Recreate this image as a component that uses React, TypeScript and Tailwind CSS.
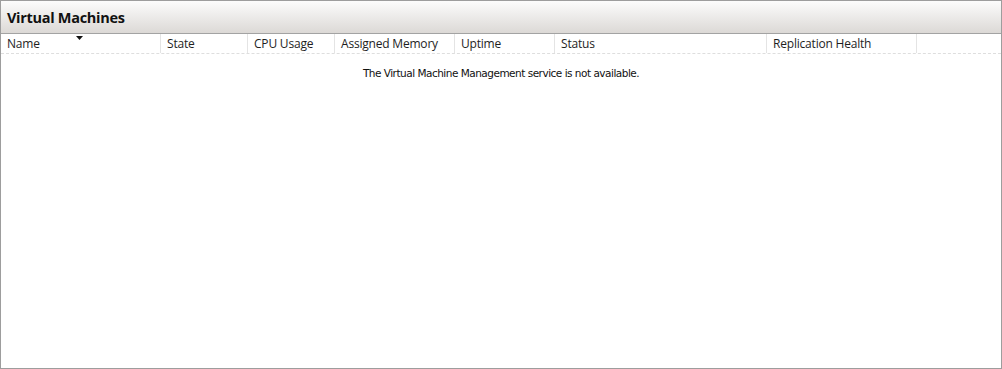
const columns = [
  { name: "Name", w: "w-[160px]", sort: true },
  { name: "State", w: "w-[87px]" },
  { name: "CPU Usage", w: "w-[87px]" },
  { name: "Assigned Memory", w: "w-[120px]" },
  { name: "Uptime", w: "w-[100px]" },
  { name: "Status", w: "w-[212px]" },
  { name: "Replication Health", w: "w-[150px]" },
];

export default function App() {
  return (
    <div className="flex h-[369px] w-[1002px] flex-col border border-[#9d9d9d] bg-white">
      {/* title bar */}
      <div className="flex h-[33px] items-center border-b border-[#a3a3a3] bg-gradient-to-b from-[#fcfcfc] to-[#dcd9d6] px-[6px] pt-[1px]">
        <span className="font-['Open_Sans',sans-serif] text-[14.5px] font-bold tracking-[-0.3px] text-[#111]">
          Virtual Machines
        </span>
      </div>

      {/* column headers */}
      <div className="flex h-[20px] border-b border-dashed border-[#dedede] font-['Open_Sans',sans-serif] text-[12px] tracking-[-0.2px] text-[#1e1e1e]">
        {columns.map((c) => (
          <div
            key={c.name}
            className={`relative flex items-center border-r border-[#e4e4e4] pl-[6px] ${c.w}`}
          >
            {c.sort && (
              <svg
                className="absolute left-[75px] top-[2px]"
                width="7"
                height="4"
                viewBox="0 0 7 4"
              >
                <path d="M0 0h7L3.5 4z" fill="#111" />
              </svg>
            )}
            {c.name}
          </div>
        ))}
        <div className="flex-1" />
      </div>

      {/* body */}
      <div className="flex-1 pt-[12px] text-center font-['DejaVu_Sans',sans-serif] text-[10.5px] tracking-[-0.5px] text-[#111]">
        The Virtual Machine Management service is not available.
      </div>
    </div>
  );
}
